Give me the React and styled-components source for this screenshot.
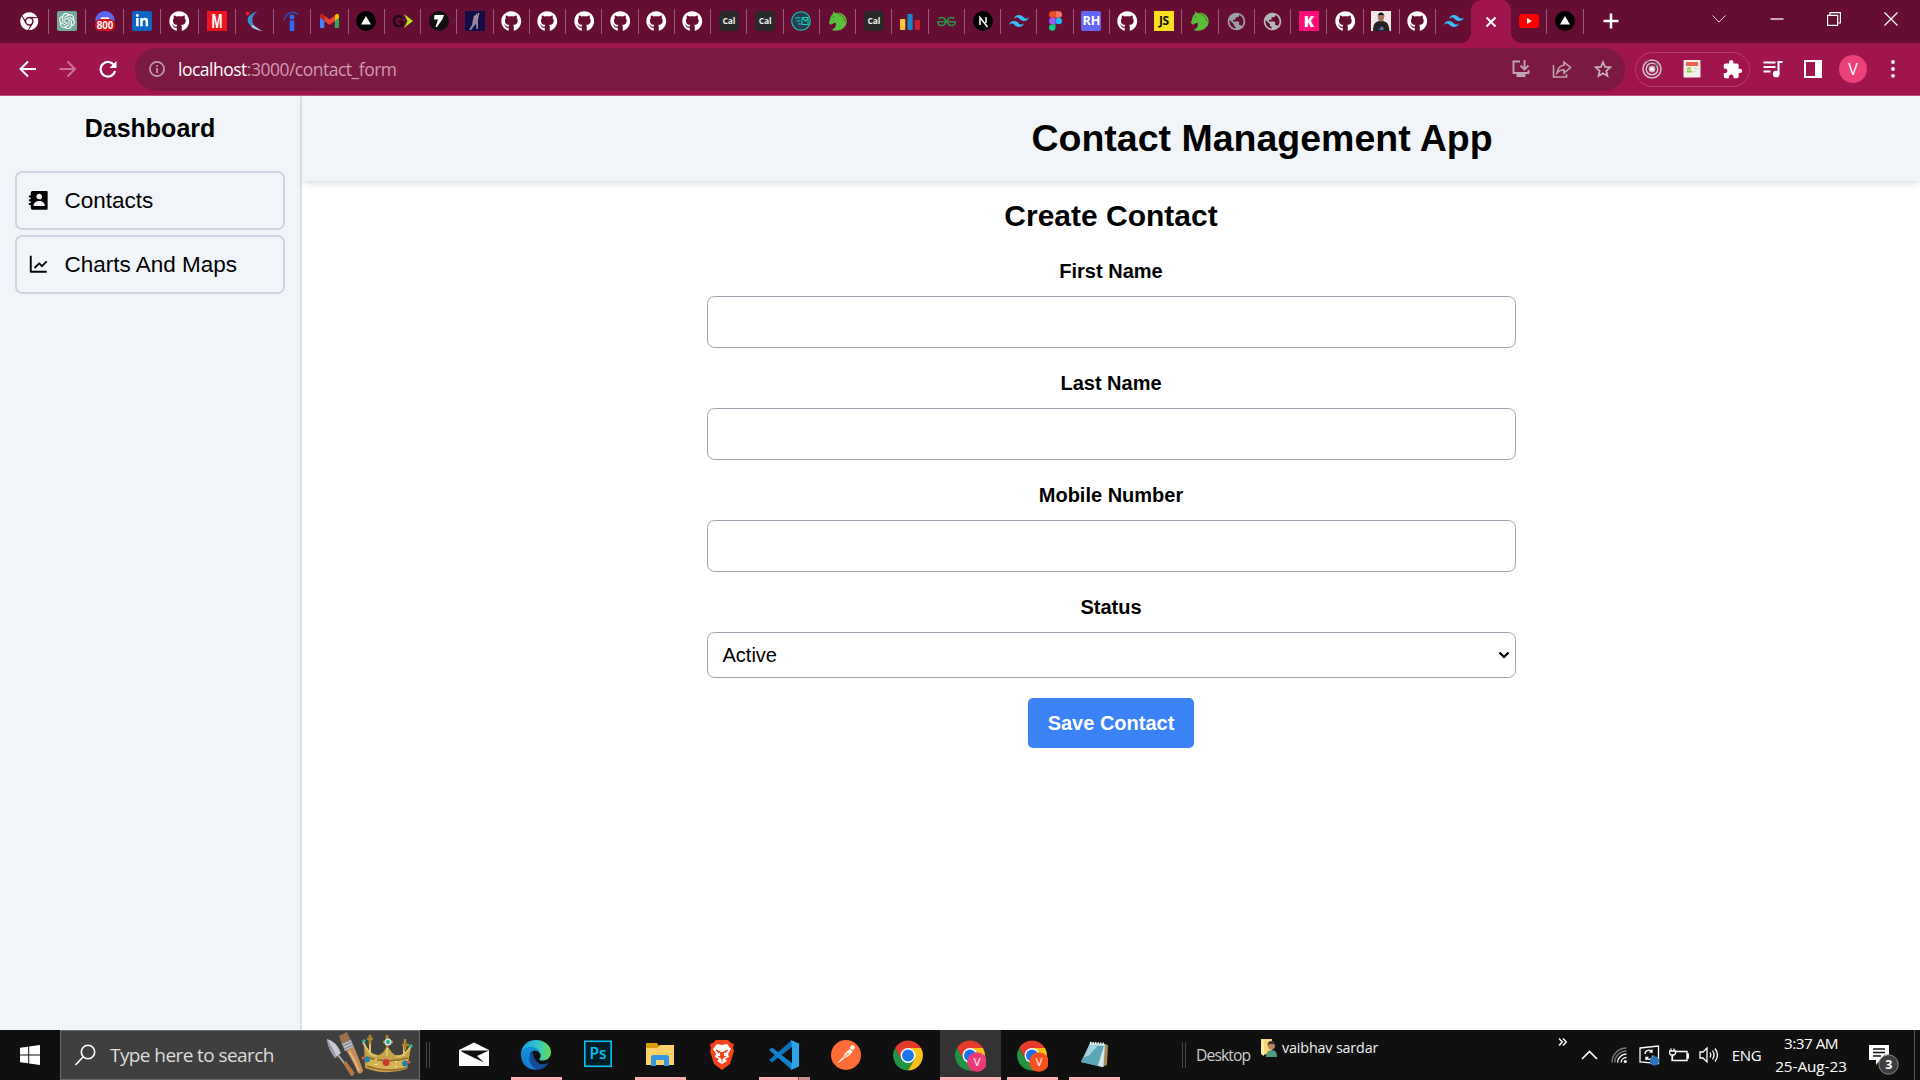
import React from "react";
import styled, { createGlobalStyle, css } from "styled-components";
import { FaGithub, FaLinkedinIn, FaChrome } from "react-icons/fa";
import { SiTailwindcss, SiGeeksforgeeks, SiOpenai } from "react-icons/si";
import { MdPublic, MdExtension } from "react-icons/md";
import { BiSolidContact, BiLineChart } from "react-icons/bi";

const GlobalStyle = createGlobalStyle`
  *, *::before, *::after { box-sizing: border-box; }
  body { margin: 0; background: #fff; overflow: hidden; }
  svg { display: block; flex: none; }
`;

const uiFont = css`font-family: "Open Sans", "Noto Sans", sans-serif;`;

const Screen = styled.div`
  width: 1920px;
  height: 1080px;
  display: flex;
  flex-direction: column;
  overflow: hidden;
  font-family: "Liberation Sans", Arial, sans-serif;
  color: #000;
`;

/* ---------- browser chrome ---------- */

const TabStrip = styled.div`
  height: 43px;
  flex: none;
  display: flex;
  padding-left: 11px;
  background: #660d33;
`;

const Tab = styled.div`
  width: ${(p) => p.$w}px;
  height: 42px;
  flex: none;
  display: flex;
  align-items: center;
  justify-content: center;
  padding-left: 0.5px;
`;

const TabDivider = styled.div`
  width: 1px;
  height: 25px;
  margin-top: 9px;
  flex: none;
  background: #99597a;
`;

const ActiveTab = styled.div`
  position: relative;
  width: 40px;
  height: 43px;
  flex: none;
  display: flex;
  align-items: center;
  justify-content: center;
  border-radius: 10px 10px 0 0;
  background: #a0154e;
  &::before, &::after {
    content: "";
    position: absolute;
    bottom: 0;
    width: 10px;
    height: 10px;
  }
  &::before {
    right: 100%;
    background: radial-gradient(circle at 0 0, transparent 9.5px, #a0154e 10px);
  }
  &::after {
    left: 100%;
    background: radial-gradient(circle at 100% 0, transparent 9.5px, #a0154e 10px);
  }
`;

const Favicon = styled.span`
  width: 20px;
  height: 20px;
  display: flex;
  align-items: center;
  justify-content: center;
  border-radius: ${(p) => p.$radius || 0}px;
  background: ${(p) => p.$bg || "transparent"};
  color: ${(p) => p.$color || "#fff"};
  font: ${(p) => p.$weight || 700} ${(p) => p.$size || 12}px/1 "Open Sans", sans-serif;
  letter-spacing: ${(p) => p.$spacing || 0}px;
`;

const WindowControls = styled.div`
  margin-left: auto;
  display: flex;
`;

const WindowButton = styled.div`
  width: 57.3px;
  height: 37px;
  display: flex;
  align-items: center;
  justify-content: center;
`;

const Toolbar = styled.div`
  height: 53px;
  flex: none;
  display: flex;
  align-items: center;
  padding-left: 8px;
  background: #a0154e;
  border-bottom: 1px solid #bd5280;
`;

const Slot = styled.div`
  width: ${(p) => p.$w || 40}px;
  height: 40px;
  flex: none;
  display: flex;
  align-items: center;
  justify-content: center;
`;

const Omnibox = styled.div`
  width: 1490px;
  height: 43px;
  margin-left: 7px;
  flex: none;
  display: flex;
  align-items: center;
  padding: 0 2px 0 14px;
  border-radius: 22px;
  background: #7b1942;
`;

const Url = styled.div`
  ${uiFont}
  flex: 1;
  margin-left: 13px;
  font-size: 17.5px;
  line-height: 24px;
  letter-spacing: -0.5px;
  color: #d29ab3;
  span { color: #fff; }
`;

const ExtensionPill = styled.div`
  width: 115px;
  height: 35px;
  margin: 0 3px 0 10px;
  display: flex;
  align-items: center;
  justify-content: center;
  gap: 20px;
  border: 1px solid #b43f70;
  border-radius: 18px;
`;

const ProfileAvatar = styled.div`
  ${uiFont}
  width: 28px;
  height: 28px;
  display: flex;
  align-items: center;
  justify-content: center;
  border-radius: 50%;
  background: #ec407a;
  color: #fff;
  font-size: 16px;
`;

/* ---------- application ---------- */

const AppShell = styled.div`
  flex: 1;
  min-height: 0;
  display: flex;
`;

const Sidebar = styled.aside`
  width: 302px;
  flex: none;
  padding: 15px 15px 0;
  background: #f1f5f9;
  border-right: 2px solid #dcdfe5;
`;

const SidebarTitle = styled.h2`
  margin: 0 0 25px;
  font-size: 25px;
  line-height: 35px;
  font-weight: 700;
  text-align: center;
`;

const Nav = styled.nav`
  display: flex;
  flex-direction: column;
  gap: 5px;
`;

const NavItem = styled.a`
  height: 59px;
  display: flex;
  align-items: center;
  gap: 15px;
  padding: 0 10px;
  border: 2px solid #cbd5e1;
  border-radius: 7px;
  font-size: 22.5px;
  line-height: 35px;
`;

const Main = styled.main`
  flex: 1;
  display: flex;
  flex-direction: column;
  align-items: center;
`;

const PageHeader = styled.header`
  align-self: stretch;
  padding: 20px 0 20px 302px;
  background: #f1f5f9;
  box-shadow: 0 5px 7.5px -1.25px rgba(148, 163, 184, 0.2), 0 2.5px 5px -2.5px rgba(100, 116, 139, 0.2);
  h1 {
    margin: 0;
    font-size: 37.5px;
    line-height: 45px;
    font-weight: 700;
    text-align: center;
  }
`;

const Form = styled.form`
  width: 809px;
  margin-top: 15px;
  display: flex;
  flex-direction: column;
  align-items: center;
`;

const FormTitle = styled.h2`
  margin: 0 0 20px;
  font-size: 30px;
  line-height: 40px;
  font-weight: 700;
`;

const Field = styled.label`
  width: 100%;
  margin-bottom: 20px;
  display: flex;
  flex-direction: column;
  gap: 10px;
  font-size: 20px;
  line-height: 30px;
  font-weight: 700;
  text-align: center;
`;

const control = css`
  width: 100%;
  padding: 0 15px;
  border: 1px solid #9ca3af;
  border-radius: 7.5px;
  background: #fff;
  color: #000;
  font: 400 20px/30px "Liberation Sans", Arial, sans-serif;
`;

const Input = styled.input`
  ${control}
  height: 52px;
`;

const SelectBox = styled.div`
  ${control}
  height: 46px;
  display: flex;
  align-items: center;
  justify-content: space-between;
  padding-right: 5px;
`;

const SaveButton = styled.button`
  height: 50px;
  padding: 0 20px;
  border: 0;
  border-radius: 5px;
  background: #3b82f6;
  color: #fff;
  font: 700 20px/30px "Liberation Sans", Arial, sans-serif;
`;

/* ---------- taskbar ---------- */

const Taskbar = styled.footer`
  ${uiFont}
  height: 50px;
  flex: none;
  display: flex;
  background: #101010;
  color: #fff;
`;

const StartButton = styled.div`
  width: 60px;
  display: flex;
  align-items: center;
  justify-content: center;
`;

const SearchBox = styled.div`
  width: 360px;
  display: flex;
  align-items: center;
  padding-left: 13px;
  border: 1px solid #6a6a6a;
  background: #3f3f3f;
  color: #dcdcdc;
  font-size: 19px;
  letter-spacing: -0.58px;
  svg:last-child { margin: 0 5px 0 auto; }
  span { margin-left: 14px; padding-bottom: 1px; }
`;

const Grip = styled.div`
  width: 4px;
  height: 26px;
  margin: 12px ${(p) => p.$after}px 0 ${(p) => p.$before}px;
  border: solid #454545;
  border-width: 0 1px;
`;

const Apps = styled.div`
  display: flex;
`;

const AppCell = styled.div`
  width: 62px;
  height: 50px;
  display: flex;
  flex-direction: column;
  align-items: center;
  justify-content: space-between;
  padding-top: 10px;
  background: ${(p) => (p.$active ? "linear-gradient(90deg, transparent 1px, #333 1px)" : "none")};
`;

const underlineFill = {
  none: "transparent",
  single: "#ffb0b4",
  stacked: "linear-gradient(90deg, #ffb0b4 39px, #6f5052 39px 40px, #cc8d91 40px)",
};

const Underline = styled.div`
  width: ${(p) => (p.$wide ? 61 : 51)}px;
  height: 3px;
  margin-left: ${(p) => (p.$wide ? 1 : 0)}px;
  background: ${(p) => underlineFill[p.$kind]};
`;

const DesktopLabel = styled.div`
  width: 65px;
  padding-top: 13px;
  color: #ccc;
  font-size: 15.7px;
  line-height: 24px;
  letter-spacing: -0.9px;
`;

const DesktopItem = styled.div`
  height: 35px;
  display: flex;
  align-items: center;
  gap: 5px;
  font-size: 14.3px;
  letter-spacing: -0.14px;
  color: #f0f0f0;
`;

const Tray = styled.div`
  margin-left: auto;
  display: flex;
  align-items: center;
`;

const TrayCell = styled.div`
  width: ${(p) => p.$w}px;
  height: 50px;
  display: flex;
  align-items: center;
  justify-content: center;
  padding: ${(p) => p.$pad || "0"};
  font-size: 15px;
  letter-spacing: -0.4px;
`;

const Clock = styled.div`
  width: 94px;
  text-align: center;
  font-size: 15.3px;
  line-height: 23px;
  letter-spacing: -0.5px;
  span { letter-spacing: -0.05px; }
`;

const ShowDesktop = styled.div`
  width: 6px;
  height: 50px;
  border-left: 1px solid #555;
`;

/* ---------- drawings ---------- */

const Github = () => <FaGithub size={20.5} color="#fff" />;

const Vercel = () => (
  <svg width="20" height="20" viewBox="0 0 20 20">
    <circle cx="10" cy="10" r="10" fill="#000" />
    <path d="M10 5l5 8.500H5z" fill="#fff" />
  </svg>
);

const Cal = () => <Favicon $bg="#292929" $radius={4} $size={8.5} $weight={700} $spacing={-0.2} $color="#eee">Cal</Favicon>;

const Horse = () => (
  <svg width="20" height="20" viewBox="0 0 20 20">
    <path d="M5.500 0l1.500 2.200C12 .5 16.500 3 18.200 7.500c1.500 5-1 9.500-6 11.500-3 1-6 1-9-.2 3-.8 5.300-3 4.800-6.800-1.800 0-2.800.3-3.700 1-.8.800-2 .9-2.700-.3-.9-.8-.7-1.700 0-2.600C2.300 7.500 2.300 5 4.800 3z" fill="#5bbf3c" />
    <path d="M9 2.500c4 .5 7 3.500 8 8" stroke="#660d33" strokeWidth=".5" fill="none" />
    <path d="M4.800 6.300l1.500-.7" stroke="#2d6b20" strokeWidth="1" />
  </svg>
);

const Visits = () => (
  <svg width="20" height="20" viewBox="0 0 20 20">
    <path d="M0 10a10 10 0 0 1 20 0z" fill="#5968ee" />
    <path d="M5 9q1-4 4-2.600h2Q14 5 15 9z" fill="#fff" />
    <rect x="0" y="8" width="20" height="12" rx="5.500" fill="#d4121b" />
    <text x="10" y="17.600" textAnchor="middle" fontFamily="Liberation Sans, sans-serif" fontSize="10" fontWeight="700" fill="#fff">800</text>
  </svg>
);

const RedM = () => (
  <svg width="20" height="20" viewBox="0 0 20 20">
    <rect width="20" height="20" fill="#f0141e" />
    <text transform="translate(10 17) scale(.68 1)" textAnchor="middle" fontFamily="Liberation Sans, sans-serif" fontSize="19.500" fontWeight="700" fill="#fff">M</text>
  </svg>
);

const Crescent = () => (
  <svg width="20" height="20" viewBox="0 0 20 20">
    <path d="M13 0C3 3 0 9 5 14c3 3.500 7 4.500 12 6-5-3-9-5-9.500-9C7 7 8 3 13 0z" fill="#3b8fd0" />
    <path d="M8 14q4 3 9 6-8-1-11-5z" fill="#a9cfe8" />
    <circle cx="2.500" cy="2.500" r="1.900" fill="#e21e2c" />
  </svg>
);

const InfoMark = () => (
  <svg width="20" height="20" viewBox="0 0 20 20">
    <path d="M2 9C4 2 10-.5 16 3" fill="none" stroke="#2557d6" strokeWidth="1.300" />
    <circle cx="10" cy="6" r="2.500" fill="#2b6cf5" />
    <rect x="7.700" y="9.500" width="4.600" height="10.500" fill="#2b6cf5" />
  </svg>
);

const Gmail = () => (
  <svg width="19" height="14" viewBox="0 0 19 14">
    <path d="M0 2v11a1 1 0 0 0 1 1h3.300V5z" fill="#4285f4" />
    <path d="M19 2v11a1 1 0 0 1-1 1h-3.300V5z" fill="#34a853" />
    <path d="M14.700 1.500V7L19 3.800V2c0-2-2-2.400-3.200-1.500z" fill="#fbbc04" />
    <path d="M4.300 7V1.500l5.200 4 5.200-4V7L9.500 11z" fill="#ea4335" />
    <path d="M0 2v1.800L4.300 7V1.500L3.200.5C2-.4 0 0 0 2z" fill="#c5221f" />
  </svg>
);

const GoArrow = () => (
  <svg width="20" height="20" viewBox="0 0 20 20">
    <text x="-1" y="15.700" fontFamily="Liberation Sans, sans-serif" fontSize="16" fontWeight="700" fill="#1a0a10">G</text>
    <path d="M11 3l9 7-9 7 3.500-7z" fill="#b7e51b" />
  </svg>
);

const Seven = () => (
  <svg width="20" height="20" viewBox="0 0 20 20">
    <circle cx="10" cy="10" r="10" fill="#111" />
    <path d="M5.500 4H15l-1.500 4-5.500 8H6.500L9 8.500H5z" fill="#fff" />
  </svg>
);

const Dancer = () => (
  <svg width="20" height="20" viewBox="0 0 20 20">
    <rect width="20" height="20" fill="#120d49" />
    <path d="M12 2l1.500 4-.5 4v8h-1.500L11 13l-2 2-3 4H4l3-5 1-6z" fill="#94859b" />
    <path d="M12 7l2-5" stroke="#b59a98" strokeWidth="1.200" />
    <circle cx="10" cy="6" r="1.400" fill="#b59a98" />
  </svg>
);

const MailSpeed = () => (
  <svg width="20" height="20" viewBox="0 0 20 20" fill="none" stroke="#19d3a6" strokeWidth="1.100">
    <circle cx="10" cy="10" r="9.300" fill="#243e5a" />
    <path d="M4 7h5M5.500 10h4M7 13h3M11 6.500h6v7h-6zM11.500 7l3 3 3-3" />
  </svg>
);

const Bars = () => (
  <svg width="20" height="20" viewBox="0 0 20 20">
    <rect x="0" y="8" width="5.300" height="11" rx="1" fill="#f6c83c" />
    <rect x="7.400" y="3" width="5.300" height="16" rx="1" fill="#1a86c8" />
    <rect x="14.700" y="9" width="5.300" height="10" rx="1" fill="#c61f2c" />
  </svg>
);

const NextLogo = () => (
  <svg width="20" height="20" viewBox="0 0 20 20" fill="none" stroke="#fff" strokeWidth="1.500">
    <circle cx="10" cy="10" r="10" fill="#000" stroke="none" />
    <path d="M7 14V6.500L14.500 16M13 6v6" />
  </svg>
);

const Figma = () => (
  <svg width="13" height="20" viewBox="0 0 13 19.500">
    <path d="M6.500 0H3.250a3.250 3.250 0 0 0 0 6.500H6.500z" fill="#f24e1e" />
    <path d="M6.500 0h3.250a3.250 3.250 0 0 1 0 6.500H6.500z" fill="#ff7262" />
    <path d="M6.500 6.500H3.250a3.250 3.250 0 0 0 0 6.500H6.500z" fill="#a259ff" />
    <circle cx="9.750" cy="9.750" r="3.250" fill="#1abcfe" />
    <path d="M3.250 13H6.500v3.250A3.250 3.250 0 1 1 3.250 13z" fill="#0acf83" />
  </svg>
);

const Portrait = () => (
  <svg width="20" height="20" viewBox="0 0 20 20">
    <rect width="20" height="20" fill="#eee9e7" />
    <path d="M2 20c0-7 2-9 6-10h4c4 1 6 3 6.500 10z" fill="#252225" />
    <ellipse cx="10" cy="6.500" rx="3" ry="4" fill="#a9745c" />
    <path d="M6.600 6c0-6 7-6 6.800 0l-1-2H7.600z" fill="#171315" />
    <path d="M9 17l2-2 2 4H8z" fill="#3b78d2" />
    <circle cx="11.500" cy="17" r="1" fill="#e34c35" />
  </svg>
);

const Youtube = () => (
  <svg width="20" height="14" viewBox="0 0 20 14">
    <rect width="20" height="14" rx="3" fill="#f00" />
    <path d="M8 4l5 3-5 3z" fill="#fff" />
  </svg>
);

const Stroke = ({ w, h = w, d, width = 2, color = "#fff", children }) => (
  <svg width={w} height={h} viewBox={`0 0 ${w} ${h}`} fill="none" stroke={color} strokeWidth={width}>
    {d && <path d={d} />}
    {children}
  </svg>
);

const ChromeLogo = ({ badge }) => (
  <svg width="32" height="32" viewBox="0 0 32 32">
    <g transform="translate(-.3 -.9) scale(.68)">
      <path d="M4.950 13A22 22 0 0 1 43.050 13H24L14.470 29.500z" fill="#e33b2e" />
      <path d="M4.950 13A22 22 0 0 0 24 46l9.530-16.500H14.470z" fill="#229342" />
      <path d="M43.050 13A22 22 0 0 1 24 46l9.530-16.500L24 13z" fill="#fbc116" />
      <circle cx="24" cy="24" r="11" fill="#fff" />
      <circle cx="24" cy="24" r="8.800" fill="#1a73e8" />
    </g>
    {badge && (
      <>
        <circle cx="23" cy="22" r="9.800" fill={badge} />
        <text x="23" y="26" textAnchor="middle" fontFamily="Open Sans, sans-serif" fontSize="11.500" fontWeight="600" fill="#fbd5df">V</text>
      </>
    )}
  </svg>
);

const WindowsLogo = () => (
  <svg width="20" height="20" viewBox="0 0 20 20" fill="#fff">
    <path d="M0 2.800L8.200 1.700v7.800H0zM9.200 1.500L20 0v9.500H9.200zM0 10.500h8.200v7.800L0 17.200zM9.200 10.500H20V20L9.200 18.500z" />
  </svg>
);

const ToolsAndCrown = () => (
  <svg width="88" height="46" viewBox="0 0 88 46">
    <path d="M1 7q9 2 14 14l-6 5Q2 17 1 7z" fill="#c9c9d2" />
    <path d="M1 7q5 7 9.500 18L9 26Q2 17 1 7z" fill="#9899a6" />
    <path d="M12 23l7 9" stroke="#aaa" strokeWidth="2" />
    <path d="M17 31l3-2 8 11q1 4-3 4z" fill="#b67845" />
    <path d="M13 4l8-4 4 9-9 4z" fill="#9a704f" />
    <path d="M16 12l9-4 3 7-9 4z" fill="#b8bcc7" />
    <path d="M17 14l9-4M18 17l9-4" stroke="#747985" />
    <path d="M20 18l8-3q4 9 9 23-1 5-5 3-4-10-12-23z" fill="#c48c57" />
    <path d="M23 19q6 9 10 20" stroke="#e3b583" strokeWidth="2" fill="none" />
    <path d="M38 12q6 11 14 11 6-1 9-10 5 10 11 11 8 1 13-9l-4 22q-21 7-42-1z" fill="#c6a247" />
    <path d="M37 10q7 15 14 14M61 7v17M85 14q-7 12-15 10M44 8v15M78 12v12" stroke="#e0c267" strokeWidth="2" fill="none" />
    <path d="M40 24q21 7 42 1l-1 10q-21 7-40-1z" fill="#d6b352" />
    <path d="M40 25q21 7 42 1M41 34q20 7 40 2" stroke="#8f6c2c" strokeWidth="1.500" fill="none" />
    <path d="M44 3v9M41 7h6M61 3v13M57 10h10M79 7v11M76 13h7" stroke="#a7862f" strokeWidth="2.600" />
    <circle cx="62" cy="10" r="3.500" fill="#d5e9e4" /><circle cx="62" cy="10" r="2" fill="#20aa91" />
    <circle cx="38" cy="9" r="1.800" fill="#25bd8f" /><circle cx="85" cy="14" r="1.800" fill="#25bd8f" />
    <circle cx="41" cy="27.500" r="3" fill="#2084a7" /><circle cx="60" cy="30.500" r="3.500" fill="#c73831" /><circle cx="79" cy="31.500" r="3" fill="#2084a7" />
    <circle cx="37" cy="26" r="1.500" fill="#ec5742" /><circle cx="83" cy="30" r="1.500" fill="#ec5742" />
    <path d="M50 27v1m0 4v1m20-4v1m0 4v1" stroke="#fff3cb" strokeWidth="2" />
  </svg>
);

const MailApp = () => (
  <svg width="30" height="30" viewBox="0 0 30 30">
    <path d="M0 10l15-7.500L30 10v16H0z" fill="#fff" />
    <path d="M1.500 10.500H30l-12 5.500 7 6.500L5 13z" fill="#101010" />
  </svg>
);

const Edge = () => (
  <svg width="30" height="30" viewBox="0 0 30 30">
    <defs>
      <linearGradient id="edgeTop"><stop stopColor="#1b9de2" /><stop offset=".55" stopColor="#31c5cf" /><stop offset="1" stopColor="#65dc4b" /></linearGradient>
      <linearGradient id="edgeBody" x2="0" y2="1"><stop stopColor="#168fd6" /><stop offset="1" stopColor="#1274ce" /></linearGradient>
    </defs>
    <path d="M0 15C0 6 6 0 15 0s15 6 15 12c0 6-4 8.500-9 8.500-3 0-3-1.500-1.700-3 1.400-2.500-.8-7.500-7.300-7.500C5 10 2 13 0 15z" fill="url(#edgeTop)" />
    <path d="M0 15c0-5 4-8 9-8 6 0 9 3 10 5-7-4-11 1-10 6 1 7 6 10 12 10C10 33 0 26 0 15z" fill="url(#edgeBody)" />
    <path d="M12 12c-7 5-3 16 6 17.500 4-.5 8-3.500 10-7-4 2.500-9 2.500-12-.5-3-3-4-7-4-10z" fill="#154c9b" />
    <path d="M10 13c-5 4-3 12 3 16-5-1-8-5-8-9s2-6 5-7z" fill="#1686db" />
  </svg>
);

const Photoshop = () => (
  <svg width="28" height="28" viewBox="0 0 28 28">
    <rect x=".8" y="1.300" width="26.400" height="25" fill="#001d26" stroke="#00c3f2" strokeWidth="1.600" />
    <text x="14" y="19.300" textAnchor="middle" fontFamily="Open Sans, sans-serif" fontSize="15.500" fontWeight="600" fill="#00c3f2">Ps</text>
  </svg>
);

const Explorer = () => (
  <svg width="28" height="30" viewBox="0 0 28 30">
    <path d="M0 3h11l2 3v5H0z" fill="#dc9a06" />
    <path d="M0 8h11l3-3h14v20H0z" fill="#fdd267" />
    <path d="M5 26V17q0-2 2-2h14q2 0 2 2v9h-5v-6h-8v6z" fill="#3796e3" />
  </svg>
);

const VsCode = () => (
  <svg width="30" height="30" viewBox="0 0 30 30">
    <path d="M0 20l3 2.500L23 7V0z" fill="#0c73b8" />
    <path d="M0 10l3-2.500L23 23v7z" fill="#1283cb" />
    <path d="M22 0l8 3.500v23L22 30l1-7V7z" fill="#2ba4ea" />
  </svg>
);

const Postman = () => (
  <svg width="30" height="30" viewBox="0 0 30 30">
    <circle cx="15" cy="15" r="15" fill="#ff6c37" />
    <circle cx="21.500" cy="7.500" r="2.300" fill="#fff" />
    <path d="M19 9l2.500 2.500-3 4-5 2.500-6 5H6.500l5.500-6 3-5z" fill="#fff" />
    <path d="M13 16.500l5-2.500M12 18l7-5.500M15 12l3 3.500" stroke="#ff6c37" strokeWidth=".6" />
  </svg>
);

const BraveLogo = () => (
  <svg width="26" height="30" viewBox="0 0 26 30">
    <path d="M7 0h12l3 3 3 1-1 4 1 3-4 13-8 6-8-6L1 11l1-3-1-4 3-1z" fill="#f5431c" />
    <path d="M13 5l5-1 4 5-3 5 1 3-4 2 2 2-5 3-5-3 2-2-4-2 1-3-3-5 4-5z" fill="#fff" />
    <path d="M7 10l4 1.500-1 1.500zM19 10l-4 1.500 1 1.500zM11.500 12v4L13 17l1.500-1v-4M9 16l4 3 4-3M13 18v4" fill="#f5431c" stroke="#f5431c" strokeWidth=".9" />
  </svg>
);

const Notepad = () => (
  <svg width="28" height="28" viewBox="0 0 28 28">
    <path d="M24 4l4 1-1 20-5 2z" fill="#a88a58" />
    <path d="M10 3l15 1-1.500 23L1 22z" fill="#b9dfe5" />
    <path d="M10 5l14 1-6 20L1 22z" fill="#5ba7b7" />
    <path d="M10 5l8 .5-9 10-5 2z" fill="#a4d6df" />
    <path d="M10 3l15 1" stroke="#eee" strokeWidth="2.500" strokeDasharray="1.500 1" />
    <path d="M24 6l-6 20 5 1z" fill="#d9e9e8" />
  </svg>
);

const UserFolder = () => (
  <svg width="16" height="18" viewBox="0 0 16 18">
    <path d="M0 0h11v14l-9 2-2-2z" fill="#f8d67a" />
    <path d="M0 0l3 3v14l-3-2z" fill="#ffe9a0" />
    <path d="M5 18q0-7 6-7 5 0 5 7z" fill="#4f9d7c" />
    <circle cx="10.500" cy="7" r="3.500" fill="#b98562" />
    <path d="M6.500 7q0-5 4-5t4 5l-2-2H8z" fill="#3b352e" />
  </svg>
);

const Notifications = () => (
  <svg width="32" height="34" viewBox="0 0 32 34">
    <path d="M1 2h20v15h-9l-4 5v-5H1z" fill="#fff" />
    <path d="M5 6h12M5 9.500h12M5 13h8" stroke="#101010" strokeWidth="1.300" />
    <circle cx="20.500" cy="21.500" r="9.700" fill="#3d3d3d" stroke="#8a8a8a" />
    <text x="20.500" y="26" textAnchor="middle" fontFamily="Open Sans, sans-serif" fontSize="12.500" fontWeight="700" fill="#fff">3</text>
  </svg>
);

const Tailwind = () => <SiTailwindcss size={20} color="#38bdf8" />;

const wideTabs = [
  <FaChrome size={18.5} color="#fff" />,
  <Favicon $bg="#74aa9c" $radius={2}><SiOpenai size={16} /></Favicon>,
  <Visits />,
  <Favicon $bg="#0a66c2" $radius={2}><FaLinkedinIn size={14} /></Favicon>,
  <Github />,
  <RedM />,
  <Crescent />,
  <InfoMark />,
  <Gmail />,
];

const narrowTabs = [
  <Vercel />, <GoArrow />, <Seven />, <Dancer />,
  <Github />, <Github />, <Github />, <Github />, <Github />, <Github />,
  <Cal />, <Cal />, <MailSpeed />, <Horse />, <Cal />, <Bars />,
  <SiGeeksforgeeks size={19} color="#2f8d46" />, <NextLogo />, <Tailwind />, <Figma />,
  <Favicon $bg="#6366f1" $radius={2} $size={12.5}>RH</Favicon>,
  <Github />,
  <Favicon $bg="#f7df1e" $color="#111" $size={12} $spacing={-0.3}>JS</Favicon>,
  <Horse />,
  <MdPublic size={21} color="#9aa0ab" />, <MdPublic size={21} color="#b5b5b5" />,
  <Favicon $bg="#ff0d78" $size={15} $weight={800}>K</Favicon>,
  <Github />, <Portrait />, <Github />,
];

const taskbarApps = [
  { icon: <MailApp />, kind: "none" },
  { icon: <Edge />, kind: "single" },
  { icon: <Photoshop />, kind: "none" },
  { icon: <Explorer />, kind: "single" },
  { icon: <BraveLogo />, kind: "none" },
  { icon: <VsCode />, kind: "stacked" },
  { icon: <Postman />, kind: "none" },
  { icon: <ChromeLogo />, kind: "none" },
  { icon: <ChromeLogo badge="#ea3b78" />, kind: "single", active: true },
  { icon: <ChromeLogo badge="#f4511e" />, kind: "single" },
  { icon: <Notepad />, kind: "single" },
];

function Browser() {
  return (
    <>
      <TabStrip>
        {wideTabs.map((icon, i) => (
          <React.Fragment key={i}>
            <Tab $w={36.5}>{icon}</Tab>
            <TabDivider />
          </React.Fragment>
        ))}
        {narrowTabs.map((icon, i) => (
          <React.Fragment key={i}>
            <Tab $w={35.25}>{icon}</Tab>
            <TabDivider />
          </React.Fragment>
        ))}
        <Tab $w={35}><Tailwind /></Tab>
        <ActiveTab><Stroke w={12} d="M1.500 1.500l9 9M10.500 1.500l-9 9" /></ActiveTab>
        <Tab $w={35}><Youtube /></Tab>
        <TabDivider />
        <Tab $w={36}><Vercel /></Tab>
        <TabDivider />
        <Tab $w={53}><Stroke w={16} width={2.500} d="M8 .5v15M.5 8h15" /></Tab>
        <WindowControls>
          <WindowButton><Stroke w={14} h={8} width={1} d="M.5 .5L7 7l6.500-6.500" color="#e8d3dc" /></WindowButton>
          <WindowButton><Stroke w={14} h={2} width={1.300} d="M.5 1h13" /></WindowButton>
          <WindowButton><Stroke w={14} width={1.200} d="M.6 3.400h10v10H.6zM3 3.400V.6h10.400V11H11" /></WindowButton>
          <WindowButton><Stroke w={14} width={1.200} d="M.5 .5l13 13M13.500 .5l-13 13" /></WindowButton>
        </WindowControls>
      </TabStrip>
      <Toolbar>
        <Slot><Stroke w={18} d="M17 9H1.500M9 1.500L1.500 9 9 16.500" /></Slot>
        <Slot><Stroke w={18} color="#cb7397" d="M.5 9H16M8.500 1.500L16 9l-7.500 7.500" /></Slot>
        <Slot>
          <Stroke w={18} width={2.200} d="M15.200 5.500A7.300 7.300 0 1 0 16 11">
            <path d="M17.500 1v7h-7z" fill="#fff" stroke="none" />
          </Stroke>
        </Slot>
        <Omnibox>
          <Stroke w={16} width={1.700} color="#bfa0ae" d="M8 7v5M8 4v1.800"><circle cx="8" cy="8" r="7.100" /></Stroke>
          <Url><span>localhost</span>:3000/contact_form</Url>
          <Slot $w={41}>
            <Stroke w={18} width={1.900} color="#c0a3b0" d="M8 1.500H1.500v11.500h15V10M12.500 0v9M8.500 5.500l4 4 4-4">
              <path d="M4.500 13h9v4h-9z" fill="#c0a3b0" stroke="none" />
            </Stroke>
          </Slot>
          <Slot $w={41}><Stroke w={20} h={18} width={1.600} color="#c0a3b0" d="M1.500 5v12h13v-3M12 2l6.500 5.500L12 13v-3.300c-3 0-5 .8-7 3.300.8-5 3.500-7.500 7-7.800z" /></Slot>
          <Slot $w={41}><Stroke w={18} width={1.700} color="#c9afba" d="M9 2l2.050 4.850 5.250.450-4 3.450 1.200 5.150L9 13.150 4.500 15.900l1.200-5.150-4-3.450 5.250-.450z" /></Slot>
        </Omnibox>
        <ExtensionPill>
          <Stroke w={20} width={1.500} color="#cfc0c7"><circle cx="10" cy="10" r="9" /><circle cx="10" cy="10" r="5.800" /><circle cx="10" cy="10" r="2.600" fill="#fff" /><circle cx="6" cy="2.500" r="1.300" fill="#777" stroke="none" /><circle cx="14" cy="5.500" r="1.500" fill="#777" stroke="none" /></Stroke>
          <svg width="20" height="20" viewBox="0 0 20 20">
            <rect x="1.500" y="1" width="17" height="17.500" rx="1" fill="#f0f0ea" />
            <rect x="4" y="3" width="12" height="4" fill="#f0604d" />
            <path d="M5 9.500h4M5 12.500h5" stroke="#8fc63f" strokeWidth="1.800" />
            <path d="M11.500 9.500h4M11.500 12.500h3" stroke="#d9dcd3" strokeWidth="1.500" />
          </svg>
          <MdExtension size={21} color="#fff" />
        </ExtensionPill>
        <Slot>
          <Stroke w={20} h={18} width={2.100} d="M.5 2.500h12M.5 7h12M.5 11.500h7M15.500 14V2h4">
            <circle cx="13.200" cy="14" r="2.300" fill="#fff" />
          </Stroke>
        </Slot>
        <Slot><Stroke w={18} d="M1 1h16v16H1z"><path d="M12 1h5v16h-5z" fill="#fff" /></Stroke></Slot>
        <Slot><ProfileAvatar>V</ProfileAvatar></Slot>
        <Slot $w={39}>
          <svg width="4" height="18" viewBox="0 0 4 18" fill="#fff"><circle cx="2" cy="2" r="1.900" /><circle cx="2" cy="9" r="1.900" /><circle cx="2" cy="15.800" r="1.900" /></svg>
        </Slot>
      </Toolbar>
    </>
  );
}

function ContactApp() {
  return (
    <AppShell>
      <Sidebar>
        <SidebarTitle>Dashboard</SidebarTitle>
        <Nav>
          <NavItem><BiSolidContact size={22.5} />Contacts</NavItem>
          <NavItem><BiLineChart size={22.5} />Charts And Maps</NavItem>
        </Nav>
      </Sidebar>
      <Main>
        <PageHeader><h1>Contact Management App</h1></PageHeader>
        <Form>
          <FormTitle>Create Contact</FormTitle>
          {["First Name", "Last Name", "Mobile Number"].map((label) => (
            <Field key={label}>{label}<Input type="text" /></Field>
          ))}
          <Field as="div">
            Status
            <SelectBox>
              Active
              <Stroke w={12} h={8} width={2.200} color="#000" d="M1.500 1.500L6 6l4.500-4.500" />
            </SelectBox>
          </Field>
          <SaveButton type="button">Save Contact</SaveButton>
        </Form>
      </Main>
    </AppShell>
  );
}

function WindowsTaskbar() {
  return (
    <Taskbar>
      <StartButton><WindowsLogo /></StartButton>
      <SearchBox>
        <Stroke w={22} width={1.600} d="M9.500 12.500L1.500 21"><circle cx="14" cy="8" r="6.700" /></Stroke>
        <span>Type here to search</span>
        <ToolsAndCrown />
      </SearchBox>
      <Grip $before={6} $after={13} />
      <Apps>
        {taskbarApps.map((app, i) => (
          <AppCell key={i} $active={app.active}>
            {app.icon}
            <Underline $kind={app.kind} $wide={app.active} />
          </AppCell>
        ))}
      </Apps>
      <Grip $before={57} $after={10} />
      <DesktopLabel>Desktop</DesktopLabel>
      <DesktopItem><UserFolder />vaibhav sardar</DesktopItem>
      <Tray>
        <TrayCell $w={9} $pad="0 0 27px"><Stroke w={9} h={8} width={1.400} d="M1 .5L4.300 4 1 7.500M5 .5L8.300 4 5 7.500" /></TrayCell>
        <TrayCell $w={44}><Stroke w={17} h={10} width={1.600} d="M1 9l7.500-7.500L16 9" /></TrayCell>
        <TrayCell $w={17}>
          <Stroke w={17} width={1.400} d="M6.500 15.500A9 9 0 0 1 15.500 7M10 15.500A5.500 5.500 0 0 1 15.500 10.500">
            <path d="M1 15.500A14.500 14.500 0 0 1 15.500 1M3.800 15.500A11.700 11.700 0 0 1 15.500 4" stroke="#777" />
            <circle cx="14.300" cy="14.500" r="1.600" fill="#fff" stroke="none" />
          </Stroke>
        </TrayCell>
        <TrayCell $w={42}>
          <Stroke w={21} width={1.300} d="M1 3L19.500 1v17.500L1 17zM6 9a4 4 0 0 1 7-2.500V4.500M13 7h-2.500M14 10.500a4 4 0 0 1-7 2.500V15M7 12.500h2.500">
            <circle cx="15.500" cy="16" r="4.700" fill="#2d73be" stroke="none" />
          </Stroke>
        </TrayCell>
        <TrayCell $w={18}><Stroke w={20} h={14} width={1.300} d="M7 3.500h11v9H3V8M18 6h1.300v4H18M.5 3h6v2.500L5 7H2L.5 5.500zM2 3V.5M5 3V.5M3.500 7v5" /></TrayCell>
        <TrayCell $w={41}><Stroke w={20} h={18} width={1.300} d="M1 6h3l4-4v14l-4-4H1zM11 6.500q1.500 2.500 0 5M13.500 4.500q3 4.500 0 9M16 2.500q5 6.500 0 13" /></TrayCell>
        <TrayCell $w={35}>ENG</TrayCell>
        <Clock>3:37 AM<br /><span>25-Aug-23</span></Clock>
        <TrayCell $w={56} $pad="10px 4px 0 0"><Notifications /></TrayCell>
        <ShowDesktop />
      </Tray>
    </Taskbar>
  );
}

export default function App() {
  return (
    <Screen>
      <GlobalStyle />
      <Browser />
      <ContactApp />
      <WindowsTaskbar />
    </Screen>
  );
}
